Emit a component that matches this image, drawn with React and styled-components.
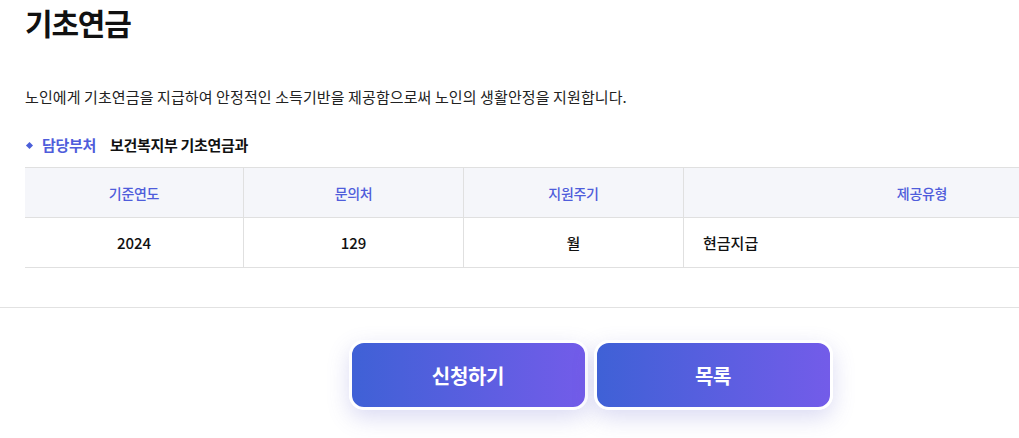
import React from "react";
import styled, { createGlobalStyle } from "styled-components";

const Global = createGlobalStyle`
  html, body { margin: 0; padding: 0; background: #fff; overflow: hidden; }
  body { font-family: "Noto Sans CJK KR", "Noto Sans", sans-serif; color: #111; }
`;

const Viewport = styled.div`
  width: 1019px;
  height: 438px;
  overflow: hidden;
`;

const Page = styled.div`
  width: 1181px;
`;

const Section = styled.section`
  padding: 0 0 0 25px;
`;

const Title = styled.h1`
  margin: 0;
  font-size: 30px;
  line-height: 44px;
  font-weight: 700;
  color: #111;
  letter-spacing: -1.2px;
`;

const Desc = styled.p`
  margin: 41px 0 0;
  font-size: 15px;
  line-height: 24px;
  color: #222;
  letter-spacing: 0.1px;
`;

const InfoRow = styled.div`
  display: flex;
  align-items: center;
  margin-top: 24px;
  font-size: 15px;
  line-height: 24px;
  letter-spacing: -0.3px;
`;

const Bullet = styled.span`
  width: 5px;
  height: 5px;
  background: #4b5fd9;
  transform: rotate(45deg);
  margin: 0 10px 0 2px;
`;

const Label = styled.span`
  color: #4f5ddb;
  font-weight: 700;
  margin-right: 14px;
`;

const Value = styled.span`
  color: #111;
  font-weight: 700;
`;

const Table = styled.div`
  margin-top: 10px;
  width: 1135px;
  display: grid;
  grid-template-columns: 219px 220px 220px 1fr;
  border-top: 1px solid #e0e0e0;
`;

const Cell = styled.div`
  height: 49px;
  display: flex;
  align-items: center;
  justify-content: ${(p) => (p.$left ? "flex-start" : "center")};
  padding-left: ${(p) => (p.$left ? "19px" : "0")};
  border-bottom: 1px solid #e0e0e0;
  border-right: ${(p) => (p.$last ? "none" : "1px solid #e0e0e0")};
  background: ${(p) => (p.$head ? "#f5f6fa" : "#fff")};
  color: ${(p) => (p.$head ? "#4f5ddb" : "#111")};
  font-size: ${(p) => (p.$head ? "14px" : "15px")};
  font-weight: 500;
  letter-spacing: ${(p) => (p.$head ? "-0.3px" : "0")};
`;

const Divider = styled.hr`
  margin: 39px 0 0;
  border: 0;
  border-top: 1px solid #e2e2e2;
`;

const Buttons = styled.div`
  display: flex;
  justify-content: center;
  gap: 6px;
  margin-top: 32px;
`;

const Button = styled.button`
  width: 239px;
  height: 70px;
  border: 3px solid #fff;
  border-radius: 15px;
  background: linear-gradient(90deg, #3f61d6 0%, #735ce9 100%);
  color: #fff;
  font-family: inherit;
  font-size: 20px;
  font-weight: 700;
  letter-spacing: -0.3px;
  box-shadow: 0 8px 22px rgba(90, 90, 200, 0.22);
  cursor: pointer;
`;

const heads = ["기준연도", "문의처", "지원주기", "제공유형"];
const vals = ["2024", "129", "월", "현금지급"];

export default function App() {
  return (
    <Viewport>
      <Global />
      <Page>
        <Section>
          <Title>기초연금</Title>
          <Desc>노인에게 기초연금을 지급하여 안정적인 소득기반을 제공함으로써 노인의 생활안정을 지원합니다.</Desc>
          <InfoRow>
            <Bullet />
            <Label>담당부처</Label>
            <Value>보건복지부 기초연금과</Value>
          </InfoRow>
          <Table>
            {heads.map((h, i) => (
              <Cell key={h} $head $last={i === 3}>{h}</Cell>
            ))}
            {vals.map((v, i) => (
              <Cell key={v} $last={i === 3} $left={i === 3}>{v}</Cell>
            ))}
          </Table>
        </Section>
        <Divider />
        <Buttons>
          <Button>신청하기</Button>
          <Button>목록</Button>
        </Buttons>
      </Page>
    </Viewport>
  );
}
